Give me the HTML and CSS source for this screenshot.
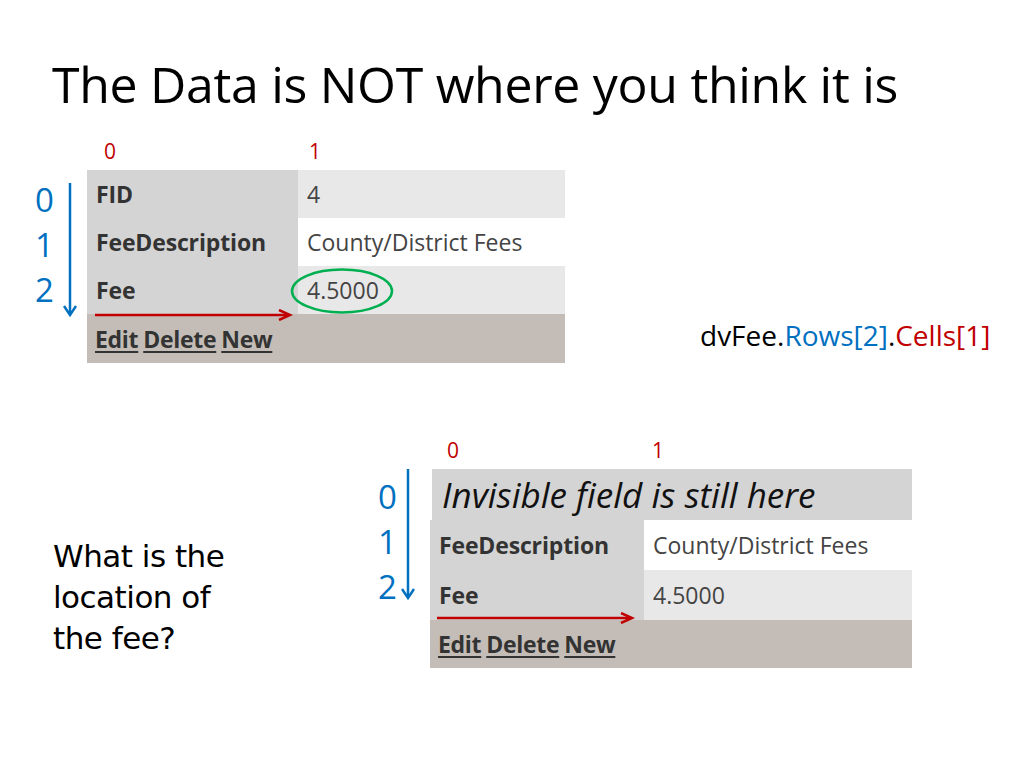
FILE: index.html
```html
<!DOCTYPE html>
<html>
<head>
<meta charset="utf-8">
<link rel="stylesheet" href="styles.css">
</head>
<body>
<div class="slide">
  <h1 class="title">The Data is NOT where you think it is</h1>

  <section class="fig fig-top">
    <div class="collabels collabels-top">
      <span class="cl cl0">0</span>
      <span class="cl cl1">1</span>
    </div>
    <div class="figrow">
      <div class="rowidx rowidx-top">
        <span>0</span><span>1</span><span>2</span>
      </div>
      <svg class="downarrow da-top" width="14" height="140" viewBox="0 0 14 140">
        <line x1="7" y1="0" x2="7" y2="131" stroke="#0070c0" stroke-width="2.5"/>
        <polyline points="1,123 7,132 13,123" fill="none" stroke="#0070c0" stroke-width="2.5"/>
      </svg>
      <div class="dv dv-top">
        <div class="r alt"><div class="k">FID</div><div class="v">4</div></div>
        <div class="r"><div class="k">FeeDescription</div><div class="v">County/District Fees</div></div>
        <div class="r alt"><div class="k">Fee</div><div class="v">4.5000</div></div>
        <div class="foot"><a>Edit</a> <a>Delete</a> <a>New</a></div>
        <svg class="rarrow ra-top" width="200" height="12" viewBox="0 0 200 12">
          <line x1="0" y1="6" x2="194" y2="6" stroke="#c00000" stroke-width="2.5"/>
          <polyline points="184,1 195,6 184,11" fill="none" stroke="#c00000" stroke-width="2.5"/>
        </svg>
        <svg class="ellipse" width="106" height="48" viewBox="0 0 106 48">
          <ellipse cx="53" cy="24" rx="50" ry="21.5" fill="none" stroke="#00b050" stroke-width="2.5"/>
        </svg>
      </div>
      <div class="caption"><span class="blk">dvFee.</span><span class="blu">Rows[2]</span><span class="blk">.</span><span class="red">Cells[1]</span></div>
    </div>
  </section>

  <section class="bottom">
    <p class="question">What is the location of the fee?</p>
    <div class="fig fig-bot">
      <div class="collabels collabels-bot">
        <span class="cl cl0">0</span>
        <span class="cl cl1">1</span>
      </div>
      <div class="figrow">
        <div class="rowidx rowidx-bot">
          <span>0</span><span>1</span><span>2</span>
        </div>
        <svg class="downarrow da-bot" width="14" height="134" viewBox="0 0 14 134">
          <line x1="7" y1="0" x2="7" y2="128" stroke="#0070c0" stroke-width="2.5"/>
          <polyline points="1,120 7,129 13,120" fill="none" stroke="#0070c0" stroke-width="2.5"/>
        </svg>
        <div class="dv dv-bot">
          <div class="inv">Invisible field is still here</div>
          <div class="r"><div class="k">FeeDescription</div><div class="v">County/District Fees</div></div>
          <div class="r alt"><div class="k">Fee</div><div class="v">4.5000</div></div>
          <div class="foot"><a>Edit</a> <a>Delete</a> <a>New</a></div>
          <svg class="rarrow ra-bot" width="200" height="12" viewBox="0 0 200 12">
            <line x1="0" y1="6" x2="194" y2="6" stroke="#c00000" stroke-width="2.5"/>
            <polyline points="184,1 195,6 184,11" fill="none" stroke="#c00000" stroke-width="2.5"/>
          </svg>
        </div>
      </div>
    </div>
  </section>
</div>
</body>
</html>
```
FILE: styles.css
```css
html, body {
  margin: 0;
  padding: 0;
  background: #ffffff;
}
.slide {
  width: 1024px;
  height: 768px;
  overflow: hidden;
  font-family: "Open Sans", "Noto Sans", sans-serif;
  color: #000;
}
.title {
  margin: 0;
  padding: 52px 0 0 52px;
  font-family: "Open Sans", sans-serif;
  font-weight: 400;
  font-size: 50px;
  line-height: 64px;
  letter-spacing: -0.3px;
  height: 76px;
  white-space: nowrap;
}

/* figure common */
.fig { position: relative; }
.collabels {
  display: flex;
  height: 38px;
  align-items: center;
  color: #c00000;
  font-family: "Open Sans", sans-serif;
  font-size: 21px;
}
.figrow {
  display: flex;
  align-items: flex-start;
}
.rowidx {
  display: flex;
  flex-direction: column;
  color: #0070c0;
  font-family: "Open Sans", sans-serif;
  font-size: 33px;
  line-height: 45px;
  width: 26px;
}
.downarrow { display: block; }

.dv {
  position: relative;
  font-family: "Open Sans", "Noto Sans", sans-serif;
  font-size: 23px;
  color: #333;
}
.r { display: flex; background: #ffffff; }
.r.alt { background: #e8e8e8; }
.k {
  background: #d4d4d4;
  font-weight: 700;
  letter-spacing: -0.15px;
  padding-left: 9px;
  box-sizing: border-box;
  display: flex;
  align-items: center;
}
.v {
  padding-left: 9px;
  color: #444;
  display: flex;
  align-items: center;
}
.foot {
  background: #c4bdb7;
  font-weight: 700;
  padding-left: 8px;
  display: flex;
  align-items: center;
  gap: 5px;
  letter-spacing: -0.3px;
  color: #333;
}
.foot a { text-decoration: underline; text-underline-offset: 3px; }

.rarrow, .ellipse { position: absolute; }

/* top figure */
.collabels-top { padding-left: 104px; padding-top: 4px; }
.collabels-top .cl0 { width: 205px; }
.fig-top .figrow { padding-left: 35px; }
.rowidx-top { margin-top: 7px; }
.da-top { margin-top: 13px; margin-left: 2px; }
.dv-top { width: 478px; margin-left: 10px; margin-top: 0; }
.dv-top .r { height: 48px; }
.dv-top .k { width: 211px; }
.dv-top .foot { height: 49px; }
.ra-top { left: 8px; top: 139px; }
.ellipse { left: 202px; top: 97px; }
.caption {
  align-self: flex-start;
  margin-top: 146px;
  margin-left: 135px;
  font-family: "Open Sans", sans-serif;
  font-size: 28px;
  white-space: nowrap;
}
.blu { color: #0070c0; }
.red { color: #c00000; }

/* bottom section */
.bottom {
  display: flex;
  margin-top: 62px;
}
.question {
  margin: 111px 0 0 53px;
  width: 200px;
  font-family: "DejaVu Sans", sans-serif;
  font-size: 31px;
  line-height: 41px;
  letter-spacing: -0.5px;
}
.fig-bot { margin-left: 125px; }
.collabels-bot { padding-left: 69px; padding-top: 5px; height: 39px; }
.collabels-bot .cl0 { width: 205px; }
.rowidx-bot { margin-top: 5px; }
.da-bot { margin-top: 0; margin-left: -3px; }
.dv-bot { width: 482px; margin-left: 15px; }
.inv {
  margin-left: 2px;
  height: 51px;
  background: #d4d4d4;
  font-style: italic;
  font-size: 35px;
  color: #111;
  padding-left: 10px;
  display: flex;
  align-items: center;
}
.dv-bot .r { height: 50px; }
.dv-bot .k { width: 214px; }
.dv-bot .foot { height: 48px; }
.ra-bot { left: 7px; top: 143px; }
```
